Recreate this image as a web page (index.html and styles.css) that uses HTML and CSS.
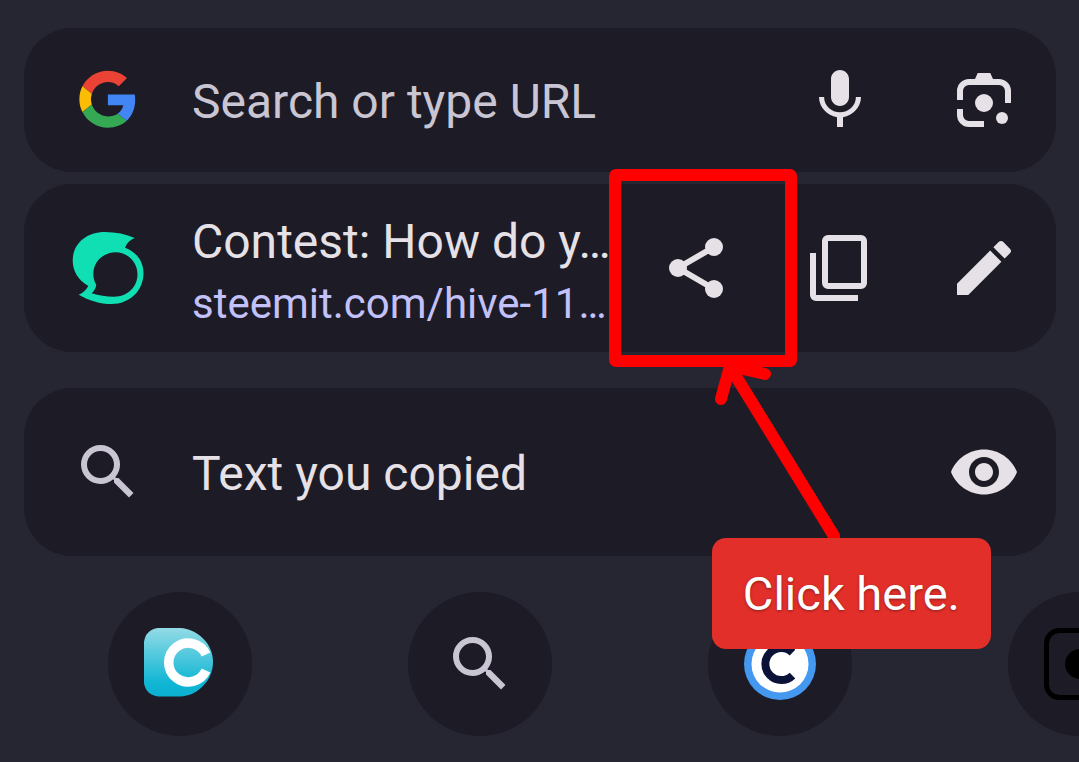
FILE: index.html
```html
<!DOCTYPE html>
<html lang="en">
<head>
  <meta charset="UTF-8">
  <meta name="viewport" content="width=device-width, initial-scale=1.0">
  <title>Search or type URL</title>
  <link rel="stylesheet" href="styles.css">
</head>
<body>
  <main class="omnibox">
    <form class="card search-bar">
      <svg class="icon" viewBox="-6.2 -5.6 60.6 60.6" aria-hidden="true">
        <path fill="#EA4335" d="M24 9.5c3.54 0 6.71 1.22 9.21 3.6l6.85-6.85C35.9 2.38 30.47 0 24 0 14.62 0 6.51 5.38 2.56 13.22l7.98 6.19C12.43 13.72 17.74 9.5 24 9.5z"/>
        <path fill="#4285F4" d="M46.98 24.55c0-1.57-.15-3.09-.38-4.55H24v9.02h12.94c-.58 2.96-2.26 5.48-4.78 7.18l7.73 6c4.51-4.18 7.09-10.36 7.09-17.65z"/>
        <path fill="#FBBC05" d="M10.53 28.59c-.48-1.45-.76-2.99-.76-4.59s.27-3.14.76-4.59l-7.98-6.19C.92 16.46 0 20.12 0 24c0 3.88.92 7.54 2.56 10.78l7.97-6.19z"/>
        <path fill="#34A853" d="M24 48c6.48 0 11.93-2.13 15.89-5.81l-7.73-6c-2.15 1.45-4.92 2.3-8.16 2.3-6.26 0-11.57-4.22-13.47-9.91l-7.98 6.19C6.51 42.62 14.62 48 24 48z"/>
      </svg>
      <input class="search-input" type="text" placeholder="Search or type URL" aria-label="Search or type URL">
      <button class="action" type="button" aria-label="Voice search">
        <svg class="icon" viewBox="0 0 24 24">
          <path d="M12 14c1.66 0 3-1.34 3-3V5c0-1.66-1.34-3-3-3S9 3.34 9 5v6c0 1.66 1.34 3 3 3zm5.3-3c0 3-2.54 5.1-5.3 5.1S6.7 14 6.7 11H5c0 3.41 2.72 6.23 6 6.72V21h2v-3.28c3.28-.48 6-3.31 6-6.72h-1.7z"/>
        </svg>
      </button>
      <button class="action" type="button" aria-label="Search with camera">
        <svg class="icon" viewBox="0 0 24 24">
          <path d="M9 5l.9-2h4.2l.9 2h2a4 4 0 0 1 4 4v4h-2V9a2 2 0 0 0-2-2H7a2 2 0 0 0-2 2v3H3V9a4 4 0 0 1 4-4z"/>
          <path d="M3 15h2v2a2 2 0 0 0 2 2h5v2H7a4 4 0 0 1-4-4z"/>
          <circle cx="12" cy="13" r="3"/>
          <circle cx="18" cy="18" r="2"/>
        </svg>
      </button>
    </form>

    <section class="card suggestion">
      <svg class="icon steem" viewBox="0 0 72 72" aria-hidden="true">
        <path fill-rule="evenodd" d="M62.7 6C54 2 44 0 33 0 14 0 .7 12 .7 28.500 .7 39 6 48 16.300 54c-2 4-5.500 7-9.600 8.700C17 68.500 28 72 39.500 72 58 72 71.500 58.500 71.500 41 71.500 29 64 19.500 53 15.700c2-5 5.500-8 9.700-9.700zM43.700 20.300c12 0 21.800 9.700 21.800 22S56 64.700 42 64.700c-8 0-15-1.200-22.300-3.400 2.500-2.300 4-5 4.600-8.300-2.100-3.500-3-7.200-3-11 0-12.300 10-21.700 22.400-21.700z"/>
      </svg>
      <div class="card-text">
        <p class="title">Contest: How do y…</p>
        <a class="url" href="#">steemit.com/hive-11…</a>
      </div>
      <button class="action" type="button" aria-label="Share">
        <svg class="icon" viewBox="0 0 24 24">
          <path d="M18 5L6 12l12 7" fill="none" stroke="currentColor" stroke-width="2"/>
          <circle cx="18" cy="5" r="3"/>
          <circle cx="6" cy="12" r="3"/>
          <circle cx="18" cy="19" r="3"/>
        </svg>
      </button>
      <button class="action" type="button" aria-label="Copy link">
        <svg class="icon" viewBox="0 0 24 24">
          <path fill-rule="evenodd" d="M8 1h11a2 2 0 0 1 2 2v14a2 2 0 0 1-2 2H8a2 2 0 0 1-2-2V3a2 2 0 0 1 2-2zM8 3v14h11V3z"/>
          <path d="M2 7h2v14h14v2H4a2 2 0 0 1-2-2z"/>
        </svg>
      </button>
      <button class="action" type="button" aria-label="Edit">
        <svg class="icon" viewBox="0 0 24 24">
          <path d="M3 17.250V21h3.750L17.810 9.940l-3.750-3.750L3 17.250zM20.710 7.040c.39-.39.39-1.020 0-1.410l-2.340-2.340c-.39-.39-1.020-.39-1.410 0l-1.830 1.830 3.750 3.750 1.830-1.830z"/>
        </svg>
      </button>
    </section>

    <section class="card clipboard">
      <svg class="icon muted" viewBox="0 0 24 24" aria-hidden="true">
        <path d="M15.500 14h-.79l-.28-.27A6.471 6.471 0 0 0 16 9.500 6.500 6.500 0 1 0 9.500 16c1.610 0 3.090-.59 4.230-1.570l.27.28v.79l5 4.990L20.490 19l-4.990-5zm-6 0C7.010 14 5 11.990 5 9.500S7.010 5 9.500 5 14 7.010 14 9.500 11.990 14 9.500 14z"/>
      </svg>
      <p class="title card-text">Text you copied</p>
      <button class="action" type="button" aria-label="Reveal">
        <svg class="icon" viewBox="0 0 24 24">
          <path d="M12 4.500C7 4.500 2.730 7.610 1 12c1.730 4.390 6 7.500 11 7.500s9.270-3.110 11-7.500c-1.730-4.390-6-7.500-11-7.500zM12 17c-2.760 0-5-2.240-5-5s2.240-5 5-5 5 2.240 5 5-2.240 5-5 5zm0-8c-1.660 0-3 1.340-3 3s1.340 3 3 3 3-1.340 3-3-1.340-3-3-3z"/>
        </svg>
      </button>
    </section>

    <nav class="shortcuts">
      <a class="shortcut" href="#" aria-label="Coin app">
        <svg class="icon" viewBox="0 0 72 72">
          <defs>
            <linearGradient id="teal" x1="0" y1="0" x2="0" y2="1">
              <stop offset="0" stop-color="#93dbe6"/>
              <stop offset="0.8" stop-color="#10b6d4"/>
              <stop offset="1" stop-color="#0bb0d0"/>
            </linearGradient>
          </defs>
          <path fill="url(#teal)" d="M14 0h22c18 1 33 16 33 34S54 68 36 68.500H14C5 67 1 62 0 55V14C1 6 6 1 14 0z"/>
          <path fill="none" stroke="#fff" stroke-width="9.500" d="M62 26.500A19.500 19.500 0 1 0 62 42.500"/>
        </svg>
      </a>
      <a class="shortcut" href="#" aria-label="Search">
        <svg class="icon muted" viewBox="0 0 24 24">
          <path d="M15.500 14h-.79l-.28-.27A6.471 6.471 0 0 0 16 9.500 6.500 6.500 0 1 0 9.500 16c1.610 0 3.090-.59 4.230-1.570l.27.28v.79l5 4.990L20.490 19l-4.990-5zm-6 0C7.010 14 5 11.990 5 9.500S7.010 5 9.500 5 14 7.010 14 9.500 11.990 14 9.500 14z"/>
        </svg>
      </a>
      <a class="shortcut" href="#" aria-label="Crypto prices">
        <svg class="icon" viewBox="0 0 72 72">
          <circle cx="36" cy="36" r="36" fill="#4498ef"/>
          <circle cx="36" cy="36" r="28.500" fill="#fff"/>
          <path fill="none" stroke="#0b1238" stroke-width="8" d="M48.500 24.500A16 16 0 1 0 48.500 47.500"/>
        </svg>
      </a>
      <a class="shortcut" href="#" aria-label="Camera">
        <svg class="icon" viewBox="0 0 72 72">
          <rect x="2.500" y="2.500" width="67" height="67" rx="13" fill="none" stroke="#000" stroke-width="5"/>
          <circle cx="36" cy="36" r="15" fill="#000"/>
        </svg>
      </a>
    </nav>

    <!-- highlight box, arrow and label over the share button -->
    <svg class="callout" viewBox="0 0 240 380" aria-hidden="true">
      <rect x="12" y="7" width="176" height="186" rx="1"/>
      <path d="M231 368L129 202M118 231l9-33 35 8"/>
    </svg>
    <div class="callout-label">Click here.</div>
  </main>
</body>
</html>
```
FILE: styles.css
```css
* {
  box-sizing: border-box;
}

body {
  margin: 0;
  background: #262532;
  color: #e6e1e6;
  font-family: Roboto, sans-serif;
  font-size: 48px;
  line-height: 56px;
}

p {
  margin: 0;
}

.omnibox {
  position: relative;
  padding: 28px 23px 28px 24px;
  overflow: hidden;
}

.card {
  display: flex;
  align-items: center;
  min-height: 168px;
  padding-left: 48px;
  border-radius: 48px;
  background: #1d1b26;
}

.search-bar {
  min-height: 144px;
  margin-bottom: 12px;
}

.suggestion {
  margin-bottom: 36px;
}

.icon {
  display: block;
  flex: none;
  width: 72px;
  height: 72px;
  fill: currentColor;
}

.muted {
  color: #c9c5d2;
}

.steem {
  color: #0fdfb2;
}

.search-input {
  flex: 1;
  min-width: 0;
  margin-left: 48px;
  padding: 4px 0 0;
  border: none;
  outline: none;
  background: none;
  color: inherit;
  font: inherit;
}

.search-input::placeholder {
  color: #c9c5d2;
  opacity: 1;
}

.card-text {
  flex: 1;
  min-width: 0;
  margin-left: 48px;
  padding-top: 4px;
  white-space: nowrap;
}

.suggestion .card-text {
  padding-top: 8px;
}

.url {
  display: block;
  margin-top: 8px;
  color: #c3c1fa;
  font-size: 42px;
  line-height: 52px;
  text-decoration: none;
}

.action {
  display: flex;
  flex: none;
  align-items: center;
  justify-content: center;
  width: 144px;
  height: 144px;
  padding: 0;
  border: none;
  background: none;
  color: inherit;
  cursor: pointer;
}

.shortcuts {
  display: flex;
  gap: 156px;
  margin-top: 36px;
  padding-left: 84px;
}

.shortcut {
  display: flex;
  flex: none;
  align-items: center;
  justify-content: center;
  width: 144px;
  height: 144px;
  border-radius: 50%;
  background: #1d1b26;
}

.callout {
  position: absolute;
  top: 168px;
  right: 236px;
  width: 240px;
  height: 380px;
  fill: none;
  stroke: #ff0000;
  stroke-width: 12px;
  stroke-linecap: round;
  stroke-linejoin: round;
  pointer-events: none;
}

.callout-label {
  position: absolute;
  top: 538px;
  right: 88px;
  padding: 28px 31px 27px;
  border-radius: 14px;
  background: #e32f2a;
  color: #fff;
  font-size: 47px;
  text-shadow: 0 1px 3px rgba(0, 0, 0, 0.4);
}
```
